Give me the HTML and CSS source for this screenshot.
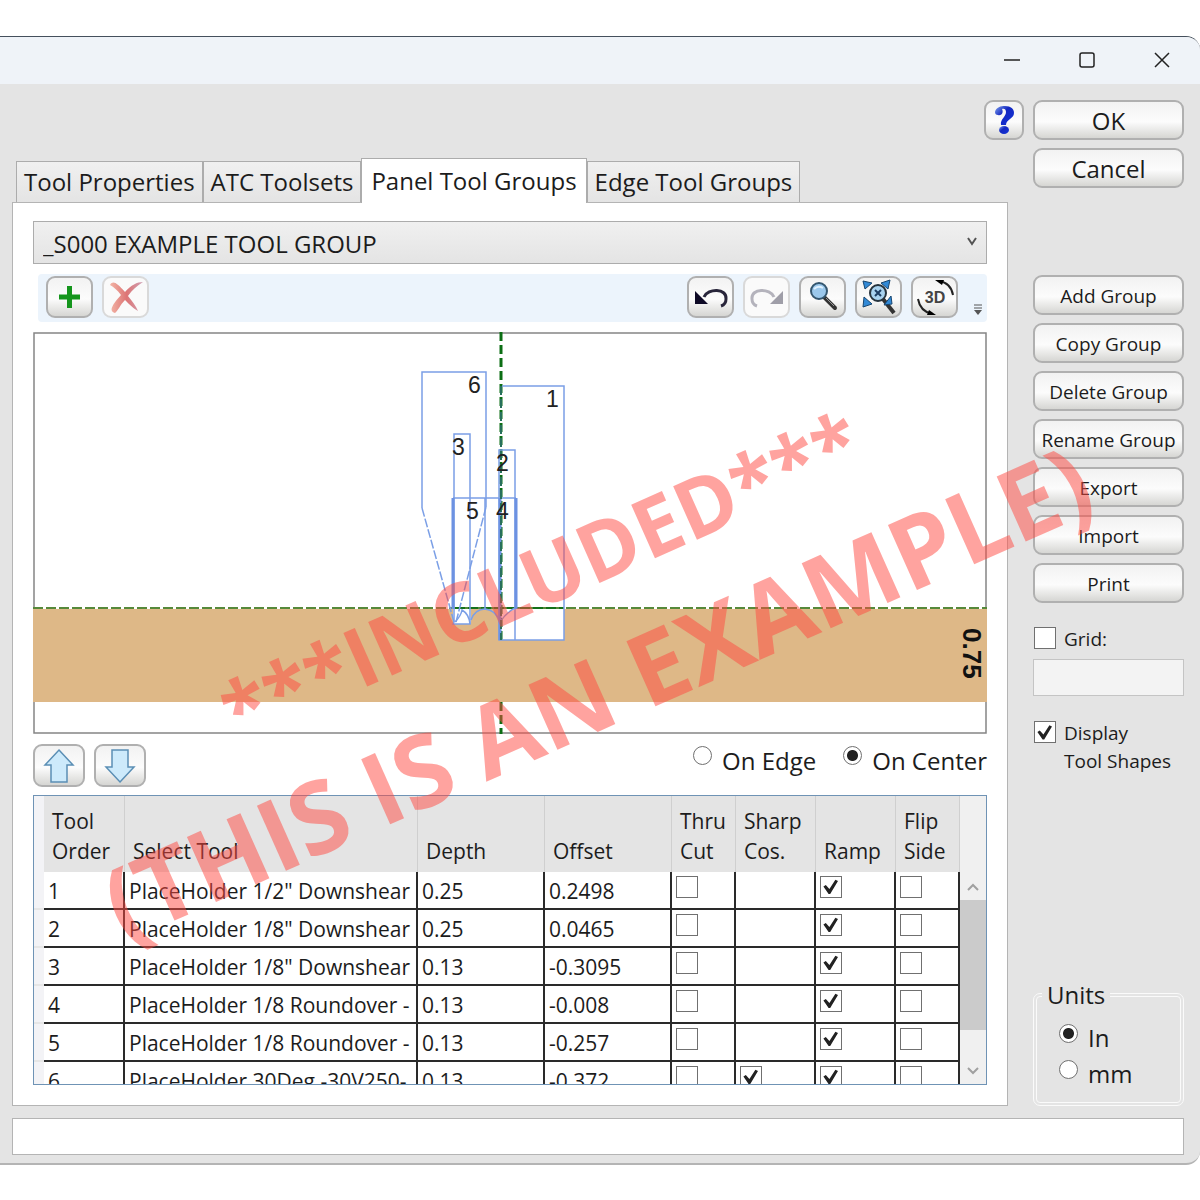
FILE: index.html
```html
<!DOCTYPE html>
<html lang="en">
<head>
<meta charset="utf-8">
<title>Tool Groups</title>
<link rel="stylesheet" href="styles.css">
</head>
<body>
<div class="window">
  <header class="titlebar">
    <button class="caption" aria-label="Minimize"><svg width="18" height="18" viewBox="0 0 18 18"><path d="M1 9H17"/></svg></button>
    <button class="caption" aria-label="Maximize"><svg width="18" height="18" viewBox="0 0 18 18"><rect x="2" y="2" width="14" height="14" rx="2"/></svg></button>
    <button class="caption" aria-label="Close"><svg width="18" height="18" viewBox="0 0 18 18"><path d="M2 2L16 16M16 2L2 16"/></svg></button>
  </header>

  <div class="content">
    <main class="main">
      <button class="btn help" aria-label="Help">
        <svg width="26" height="32" viewBox="0 0 26 32">
          <defs><linearGradient id="blue" x1="0" y1="0" x2="1" y2="1"><stop offset="0" stop-color="#7fa2ee"/><stop offset=".4" stop-color="#1428c0"/><stop offset=".8" stop-color="#1430d0"/><stop offset="1" stop-color="#5c9cf0"/></linearGradient></defs>
          <path d="M4 8C5 3 10 2 14 2C20 2 23 5 23 9C23 15 15 15 15 21H10C9 15 15 13 15 8C15 5 13 4 11 5C13 9 10 12 7 11C5 11 4 10 4 8Z" fill="url(#blue)"/>
          <ellipse cx="13" cy="26" rx="5" ry="4" fill="url(#blue)"/>
        </svg>
      </button>

      <div class="tabs" role="tablist">
        <button class="tab" role="tab">Tool Properties</button>
        <button class="tab" role="tab">ATC Toolsets</button>
        <button class="tab selected" role="tab" aria-selected="true">Panel Tool Groups</button>
        <button class="tab" role="tab">Edge Tool Groups</button>
      </div>

      <section class="panel">
        <div class="combo">
          <select aria-label="Tool group"><option>_S000 EXAMPLE TOOL GROUP</option></select>
          <svg class="combo-arrow" width="10" height="10" viewBox="0 0 10 10"><path d="M1 1L5 7L9 1" fill="none" stroke="#555" stroke-width="2"/></svg>
        </div>

        <div class="toolbar">
          <button class="btn tool" aria-label="Add">
            <svg width="46" height="42" viewBox="0 0 46 42"><path d="M20 10H25V18.500H33V23.500H25V32H20V23.500H12V18.500H20Z" fill="#14951c"/></svg>
          </button>
          <button class="btn tool off" aria-label="Remove" disabled>
            <svg width="46" height="42" viewBox="0 0 46 42"><defs><linearGradient id="fade"><stop offset="0" stop-color="#f3b5a6"/><stop offset=".5" stop-color="#dd7575"/><stop offset="1" stop-color="#cfa0b4"/></linearGradient></defs><path d="M7 9C10 4 14 7 22 16C28 9 34 6 40 6C34 10 29 14 25 20C29 25 33 30 35 35C31 33 26 28 22 24C17 29 15 35 12 37C5 35 10 28 18 19C14 14 11 11 7 9Z" fill="url(#fade)"/></svg>
          </button>
          <span class="spacer"></span>
          <button class="btn tool" aria-label="Undo">
            <svg width="46" height="42" viewBox="0 0 46 42"><path d="M16 21C20 12 39 12 38 23C38 27 36 29 33 30" fill="none" stroke="#29263b" stroke-width="3"/><path d="M7 15V28H20Z" fill="#0e0a26"/></svg>
          </button>
          <button class="btn tool off" aria-label="Redo" disabled>
            <svg width="46" height="42" viewBox="0 0 46 42"><path d="M30 21C26 12 7 12 8 23C8 27 10 29 13 30" fill="none" stroke="#b4b3bc" stroke-width="3"/><path d="M39 15V28H26Z" fill="#9f9ea8"/></svg>
          </button>
          <button class="btn tool" aria-label="Zoom">
            <svg width="46" height="42" viewBox="0 0 46 42"><path d="M24 21L35 32" stroke="#333" stroke-width="4" stroke-linecap="round"/><path d="M26 22L34 30" stroke="#999" stroke-width="1"/><circle cx="19" cy="15" r="8" fill="#9bc8ec" stroke="#34566f" stroke-width="2"/><path d="M14 13Q18 9 23 12" fill="none" stroke="#dff1ff" stroke-width="2"/></svg>
          </button>
          <button class="btn tool" aria-label="Zoom to fit">
            <svg width="46" height="42" viewBox="0 0 46 42"><path d="M27 23L38 37" stroke="#333" stroke-width="4"/><g fill="#3189d6" stroke="#17456f"><path d="M7 5L16 7L9 13Z"/><path d="M34 4L32 13L25 7Z"/><path d="M7 31L8 21L16 28Z"/><path d="M36 28L28 29L35 20Z"/></g><circle cx="22" cy="17" r="8" fill="#a8d2ef" stroke="#26333d" stroke-width="2"/><path d="M19 14L25 20M25 14L19 20" stroke="#1d3d63" stroke-width="2"/></svg>
          </button>
          <button class="btn tool" aria-label="Rotate 3D">
            <svg width="46" height="42" viewBox="0 0 46 42"><path d="M27 5Q39 7 41 19M6 23Q8 35 20 38" fill="none" stroke="#222" stroke-width="2"/><path d="M23 4L32 4L30 9Z"/><path d="M24 39L15 39L17 34Z"/><text x="23" y="27" text-anchor="middle" class="three">3D</text></svg>
          </button>
          <svg class="overflow" width="10" height="12" viewBox="0 0 10 12"><path d="M1 1H9M1 4H9" stroke="#555" stroke-width="1"/><path d="M1 6H9L5 11Z" fill="#555"/></svg>
        </div>

        <svg class="drawing" viewBox="0 0 954 402" role="img" aria-label="Tool shapes over a 0.75 panel">
          <rect x="1" y="1" width="952" height="400" fill="#fff" stroke="#858585" stroke-width="1.500"/>
          <rect x="0" y="277" width="954" height="93" fill="#deb887"/>
          <path d="M420 276H438V292H420ZM466 276H531V308H466Z" fill="#fff"/>
          <path d="M0 276H954" stroke="#56893a" stroke-width="2" stroke-dasharray="10 3"/>
          <path d="M422 276H531" stroke="#14701a" stroke-width="2" stroke-dasharray="10 3"/>
          <path d="M468 0V308M468 370V402" stroke="#0c6e14" stroke-width="3" stroke-dasharray="9 4"/>
          <g fill="none" stroke="#7b9fe6" stroke-width="1.500">
            <path d="M389 176V40H453V175"/>
            <path d="M389 176L421 290M453 175L423 290" stroke-dasharray="9 2"/>
            <path d="M421 290V102H437V292H420Z"/>
            <path d="M469 54H531V308H466V118H482V308"/>
            <path d="M420 166H483M452 166V277"/>
            <path d="M438 288Q442 277 452 277Q463 278 467 290Q474 280 482 276M422 290Q428 284 429 278Q436 282 437 292"/>
          </g>
          <path d="M420 166V277M467 166V308M483 166V277" stroke="#6d92e2" stroke-width="3"/>
          <path d="M468 54V308" stroke="#27705c" stroke-width="2" stroke-dasharray="9 4"/>
          <g class="numbers">
            <text x="435" y="61">6</text><text x="513" y="75">1</text><text x="419" y="123">3</text>
            <text x="463" y="139">2</text><text x="433" y="187">5</text><text x="463" y="187">4</text>
          </g>
          <text class="thickness" transform="translate(930 296) rotate(90)">0.75</text>
        </svg>

        <div class="order-row">
          <button class="btn move" aria-label="Move up"><svg width="32" height="36" viewBox="0 0 32 36"><path d="M16 2L30 17H24V34H8V17H2Z"/></svg></button>
          <button class="btn move" aria-label="Move down"><svg width="32" height="36" viewBox="0 0 32 36"><path d="M16 34L30 19H24V2H8V19H2Z"/></svg></button>
          <span class="spacer"></span>
          <label class="radio"><input type="radio" name="origin"><span>On Edge</span></label>
          <label class="radio"><input type="radio" name="origin" checked><span>On Center</span></label>
        </div>

        <div class="grid-box">
          <table>
            <colgroup><col class="c-head"><col class="c-order"><col><col class="c-num"><col class="c-num"><col class="c-check"><col class="c-wide"><col class="c-wide"><col class="c-check"></colgroup>
            <thead>
              <tr><th></th><th>Tool<br>Order</th><th>Select Tool</th><th>Depth</th><th>Offset</th><th>Thru<br>Cut</th><th>Sharp<br>Cos.</th><th>Ramp</th><th>Flip<br>Side</th></tr>
            </thead>
            <tbody>
              <tr><td></td><td>1</td><td>PlaceHolder 1/2" Downshear</td><td>0.25</td><td>0.2498</td><td><input type="checkbox" aria-label="Thru cut 1"></td><td></td><td><input type="checkbox" aria-label="Ramp 1" checked></td><td><input type="checkbox" aria-label="Flip side 1"></td></tr>
              <tr><td></td><td>2</td><td>PlaceHolder 1/8" Downshear</td><td>0.25</td><td>0.0465</td><td><input type="checkbox" aria-label="Thru cut 2"></td><td></td><td><input type="checkbox" aria-label="Ramp 2" checked></td><td><input type="checkbox" aria-label="Flip side 2"></td></tr>
              <tr><td></td><td>3</td><td>PlaceHolder 1/8" Downshear</td><td>0.13</td><td>-0.3095</td><td><input type="checkbox" aria-label="Thru cut 3"></td><td></td><td><input type="checkbox" aria-label="Ramp 3" checked></td><td><input type="checkbox" aria-label="Flip side 3"></td></tr>
              <tr><td></td><td>4</td><td>PlaceHolder 1/8 Roundover -</td><td>0.13</td><td>-0.008</td><td><input type="checkbox" aria-label="Thru cut 4"></td><td></td><td><input type="checkbox" aria-label="Ramp 4" checked></td><td><input type="checkbox" aria-label="Flip side 4"></td></tr>
              <tr><td></td><td>5</td><td>PlaceHolder 1/8 Roundover -</td><td>0.13</td><td>-0.257</td><td><input type="checkbox" aria-label="Thru cut 5"></td><td></td><td><input type="checkbox" aria-label="Ramp 5" checked></td><td><input type="checkbox" aria-label="Flip side 5"></td></tr>
              <tr><td></td><td>6</td><td>PlaceHolder 30Deg -30V250-</td><td>0.13</td><td>-0.372</td><td><input type="checkbox" aria-label="Thru cut 6"></td><td><input type="checkbox" aria-label="Sharp corners 6" checked></td><td><input type="checkbox" aria-label="Ramp 6" checked></td><td><input type="checkbox" aria-label="Flip side 6"></td></tr>
            </tbody>
          </table>
          <div class="scrollbar">
            <svg width="12" height="8" viewBox="0 0 12 8"><path d="M1 7L6 2L11 7"/></svg>
            <div class="thumb"></div>
            <svg width="12" height="8" viewBox="0 0 12 8"><path d="M1 1L6 6L11 1"/></svg>
          </div>
        </div>
      </section>
    </main>

    <aside class="side">
      <div class="stack large"><button class="btn">OK</button><button class="btn">Cancel</button></div>
      <div class="stack groups">
        <button class="btn">Add Group</button><button class="btn">Copy Group</button><button class="btn">Delete Group</button><button class="btn">Rename Group</button><button class="btn">Export</button><button class="btn">Import</button><button class="btn">Print</button>
      </div>
      <label class="check"><input type="checkbox"><span>Grid:</span></label>
      <input class="grid-size" type="text" aria-label="Grid size" disabled>
      <label class="check"><input type="checkbox" checked><span>Display<br>Tool Shapes</span></label>
      <fieldset class="units">
        <legend>Units</legend>
        <label class="radio"><input type="radio" name="units" checked><span>In</span></label>
        <label class="radio"><input type="radio" name="units"><span>mm</span></label>
      </fieldset>
    </aside>
    <input class="status" type="text" aria-label="Status" readonly>
  </div>
</div>
<svg class="watermark" viewBox="0 0 1200 1200">
  <text class="mark-small" transform="translate(238 744) rotate(-24)">***INCLUDED***</text>
  <text class="mark-large" transform="translate(124 943) rotate(-24)">(THIS IS AN EXAMPLE)</text>
</svg>
</body>
</html>
```
FILE: styles.css
```css
* { box-sizing: border-box; }
body {
  margin: 0;
  padding: 36px 0;
  position: relative;
  background: #fff;
  color: #1c1c1c;
  font: 24px/30px "Open Sans", "Noto Sans", sans-serif;
  overflow-x: hidden;
}
button, input, select { font: inherit; color: inherit; margin: 0; }
.window {
  background: #e4e4e4;
  border-top: 1px solid #45505c;
  border-bottom: 2px solid #b4b4b4;
  border-radius: 0 14px 14px 0;
  overflow: hidden;
}
.titlebar {
  height: 47px;
  display: flex;
  justify-content: flex-end;
  padding: 0 1px 2px 0;
  background: #eff3f8;
}
.caption {
  width: 75px;
  padding: 0;
  border: 0;
  background: none;
  display: grid;
  place-items: center;
}
.caption svg { fill: none; stroke: #222; stroke-width: 1.5; }
.content {
  display: grid;
  grid-template-columns: minmax(0, 1fr) 151px;
  column-gap: 9px;
  padding: 16px 16px 8px 12px;
}
.main { display: flex; flex-direction: column; }
.btn {
  height: 40px;
  padding: 2px 0 0;
  border: 2px solid #b0b0b0;
  border-radius: 9px;
  background: linear-gradient(#f2f2f2, #fcfcfc 55%, #d6d6d3);
}
.help {
  width: 40px;
  padding: 0;
  align-self: flex-end;
  display: grid;
  place-items: center;
}
.tabs {
  display: flex;
  align-items: flex-end;
  height: 44px;
  margin: 18px 0 0 4px;
}
.tab {
  height: 41px;
  padding: 0 7px;
  border: 1px solid #acacac;
  border-bottom: 0;
  background: linear-gradient(#f0f0f0, #e4e4e4);
  white-space: nowrap;
}
.tab.selected {
  height: 45px;
  margin-bottom: -1px;
  padding: 0 9px;
  background: #fff;
  z-index: 1;
}
.panel {
  margin-right: 16px;
  padding: 18px 20px 20px;
  border: 1px solid #b4b4b4;
  background: #fff;
}
.combo { position: relative; }
.combo select {
  display: block;
  width: 100%;
  height: 43px;
  padding: 2px 9px 0;
  border: 1px solid #acacac;
  border-radius: 0;
  appearance: none;
  background: linear-gradient(#f0f0f0, #e4e4e4);
}
.combo-arrow { position: absolute; right: 10px; top: 16px; }
.toolbar {
  display: flex;
  gap: 9px;
  height: 48px;
  margin: 10px 0 10px 5px;
  padding: 2px 4px 2px 8px;
  border-radius: 4px;
  background: #ecf4fc;
}
.tool { width: 47px; height: 42px; padding: 0; display: grid; place-items: center; }
.tool svg { margin: -2px; }
.off { border-color: #d9d9d9; background: #fafafa; }
.spacer { flex: 1; }
.three { font: 700 16px "Liberation Sans", sans-serif; fill: #444; }
.overflow { align-self: flex-end; margin: 0 0 4px 6px; }
.drawing { display: block; width: 100%; }
.numbers { font: 23px "Liberation Sans", sans-serif; fill: #222; }
.thickness { font: 700 26px "Liberation Sans", sans-serif; fill: #111; }
.order-row {
  display: flex;
  gap: 9px;
  margin: 10px 0 8px;
}
.move { width: 52px; height: 43px; padding: 0; display: grid; place-items: center; }
.move path { fill: #cdeafb; stroke: #5b8fb5; stroke-width: 1.5; }
.radio { display: flex; gap: 10px; }
.order-row .radio { margin-left: 18px; }
.radio span { padding-top: 2px; }
input[type="radio"] {
  appearance: none;
  flex: none;
  width: 19px;
  height: 19px;
  margin-top: 2px;
  border: 1px solid #707070;
  border-radius: 50%;
  background: #fff;
}
input[type="radio"]:checked { background: radial-gradient(circle, #222 5px, #fff 6px); }
input[type="checkbox"] {
  appearance: none;
  display: block;
  flex: none;
  width: 22px;
  height: 22px;
  border: 1px solid #707070;
  background: #fff;
}
input[type="checkbox"]:checked::before {
  content: "";
  display: block;
  height: 20px;
  background: #222;
  clip-path: polygon(12% 50%, 24% 42%, 42% 62%, 72% 16%, 85% 22%, 46% 88%, 38% 88%);
}
.grid-box {
  display: grid;
  grid-template-columns: minmax(0, 1fr) 26px;
  grid-template-rows: minmax(0, 1fr);
  height: 290px;
  border: 1px solid #6f93b5;
  overflow: hidden;
}
table {
  width: 100%;
  table-layout: fixed;
  border-collapse: separate;
  border-spacing: 0;
  align-self: start;
  font-size: 21px;
  line-height: 30px;
}
.c-head { width: 10px; }
.c-order { width: 81px; }
.c-num { width: 127px; }
.c-check { width: 64px; }
.c-wide { width: 80px; }
th {
  height: 76px;
  padding: 0 0 6px 8px;
  border-right: 1px solid #cfcfcf;
  background: #e4e4e4;
  font-weight: 400;
  text-align: left;
  vertical-align: bottom;
  white-space: nowrap;
}
td {
  height: 38px;
  padding: 1px 0 0 4px;
  border-right: 2px solid #2a2a2a;
  border-bottom: 2px solid #2a2a2a;
  white-space: nowrap;
  overflow: hidden;
}
th:first-child, td:first-child { padding: 0; background: #f3f3f6; border-color: #e6e6e6; border-right: 0; }
td input[type="checkbox"] { margin-bottom: 8px; }
.scrollbar {
  display: grid;
  grid-template-rows: 104px 130px 1fr;
  justify-items: center;
  background: #f0f0f0;
}
.scrollbar svg { align-self: end; margin-bottom: 9px; fill: none; stroke: #a0a0a0; stroke-width: 2; }
.thumb { width: 100%; background: #cbcbcb; }
.side { display: flex; flex-direction: column; font-size: 19px; line-height: 28px; }
.stack { display: flex; flex-direction: column; gap: 8px; }
.large { font-size: 24px; }
.groups { margin: 87px 0 22px; }
.check { display: flex; gap: 8px; padding-left: 1px; }
.check input { margin-top: 2px; }
.check span { white-space: nowrap; }
.grid-size {
  width: 100%;
  height: 37px;
  margin: 6px 0 23px;
  border: 1px solid #c4c4c4;
  background: #f3f3f3;
}
.units {
  margin: auto 0 0;
  padding: 8px 0 12px 22px;
  border: 4px double #fafafa;
  border-radius: 7px;
  font-size: 24px;
  line-height: 30px;
}
.units legend { margin-left: -17px; padding: 0 5px; }
.units .radio { height: 36px; }
.units .radio input { margin-top: 6px; }
.units .radio span { padding-top: 5px; }
.status {
  grid-column: 1 / -1;
  width: 100%;
  height: 37px;
  margin-top: 12px;
  border: 1px solid #b4b4b4;
  background: #fff;
}
.watermark {
  position: absolute;
  top: 0;
  left: 0;
  width: 100%;
  pointer-events: none;
  fill: #ff4740;
  fill-opacity: .5;
  font-family: "Open Sans", sans-serif;
  font-weight: 700;
}
.mark-small { font-size: 82px; }
.mark-large { font-size: 100px; }
```
